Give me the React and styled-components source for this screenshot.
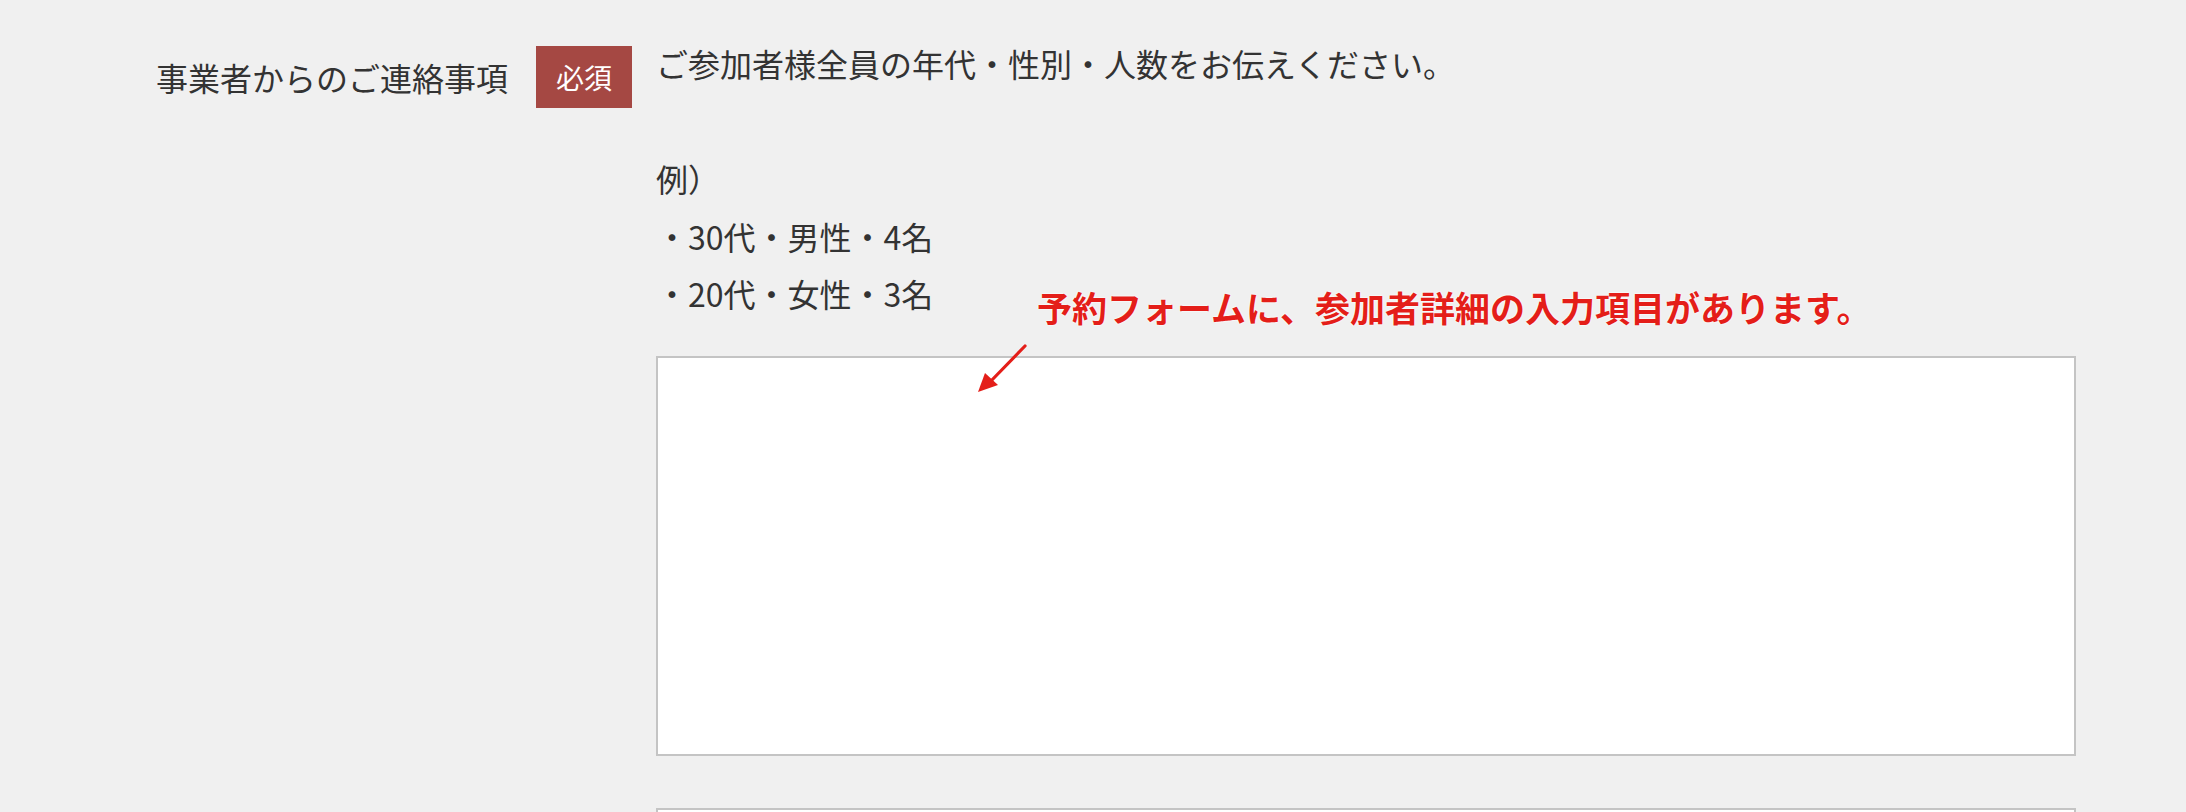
import React from "react";
import styled, { createGlobalStyle } from "styled-components";

const GlobalStyle = createGlobalStyle`
  html, body {
    margin: 0;
    padding: 0;
    background: #f0f0f0;
    font-family: "Noto Sans CJK JP", "Noto Sans", sans-serif;
    color: #333;
  }
`;

const Page = styled.div`
  position: relative;
  height: 812px;
  overflow: hidden;
`;

const Row = styled.div`
  display: flex;
  align-items: flex-start;
  padding: 35px 0 0 156px;
`;

const Header = styled.div`
  width: 500px;
  flex-shrink: 0;
  display: flex;
  align-items: center;
  gap: 28px;
  margin-top: 11px;
`;

const Label = styled.div`
  font-size: 32px;
  line-height: 1.4;
  white-space: nowrap;
`;

const Badge = styled.span`
  display: inline-block;
  height: 62px;
  line-height: 62px;
  padding: 0 20px;
  background: #a54843;
  color: #fff;
  font-size: 28px;
`;

const Content = styled.div`
  width: 1420px;
`;

const Note = styled.div`
  display: flex;
  flex-direction: column;
  align-items: flex-start;
`;

const Line = styled.p`
  margin: 0 0 ${(p) => (p.$gap ? 57.6 : 0)}px;
  font-size: 32px;
  line-height: 57.6px;
  white-space: nowrap;
`;

const TextArea = styled.textarea`
  display: block;
  box-sizing: border-box;
  width: 100%;
  height: ${(p) => p.$h}px;
  margin-top: ${(p) => p.$top}px;
  border: 2px solid #c4c4c4;
  border-radius: 0;
  background: #fff;
  resize: none;
  outline: none;
  font-family: inherit;
  font-size: 32px;
`;

const Callout = styled.div`
  position: absolute;
  left: 1037px;
  top: 289px;
  font-size: 35px;
  line-height: 1;
  font-weight: 700;
  color: #e41e19;
  white-space: nowrap;
  text-shadow: 0 0 2px #fff, 0 0 2px #fff;
`;

const Arrow = styled.svg`
  position: absolute;
  left: 972px;
  top: 340px;
`;

const App = () => {
  return (
    <Page>
      <GlobalStyle />
      <Row>
        <Header>
          <Label>事業者からのご連絡事項</Label>
          <Badge>必須</Badge>
        </Header>
        <Content>
          <Note>
            <Line $gap>ご参加者様全員の年代・性別・人数をお伝えください。</Line>
            <Line>例）</Line>
            <Line>・30代・男性・4名</Line>
            <Line>・20代・女性・3名</Line>
          </Note>
          <TextArea $h={400} $top={33} />
          <TextArea $h={120} $top={52} />
        </Content>
      </Row>
      <Callout>予約フォームに、参加者詳細の入力項目があります。</Callout>
      <Arrow width="60" height="60" viewBox="0 0 60 60">
        <line x1="53" y1="6" x2="18" y2="42" stroke="#e41e19" strokeWidth="3.2" strokeLinecap="round" />
        <polygon points="6,52 13,33 26,45" fill="#e41e19" />
      </Arrow>
    </Page>
  );
};

export default App;
